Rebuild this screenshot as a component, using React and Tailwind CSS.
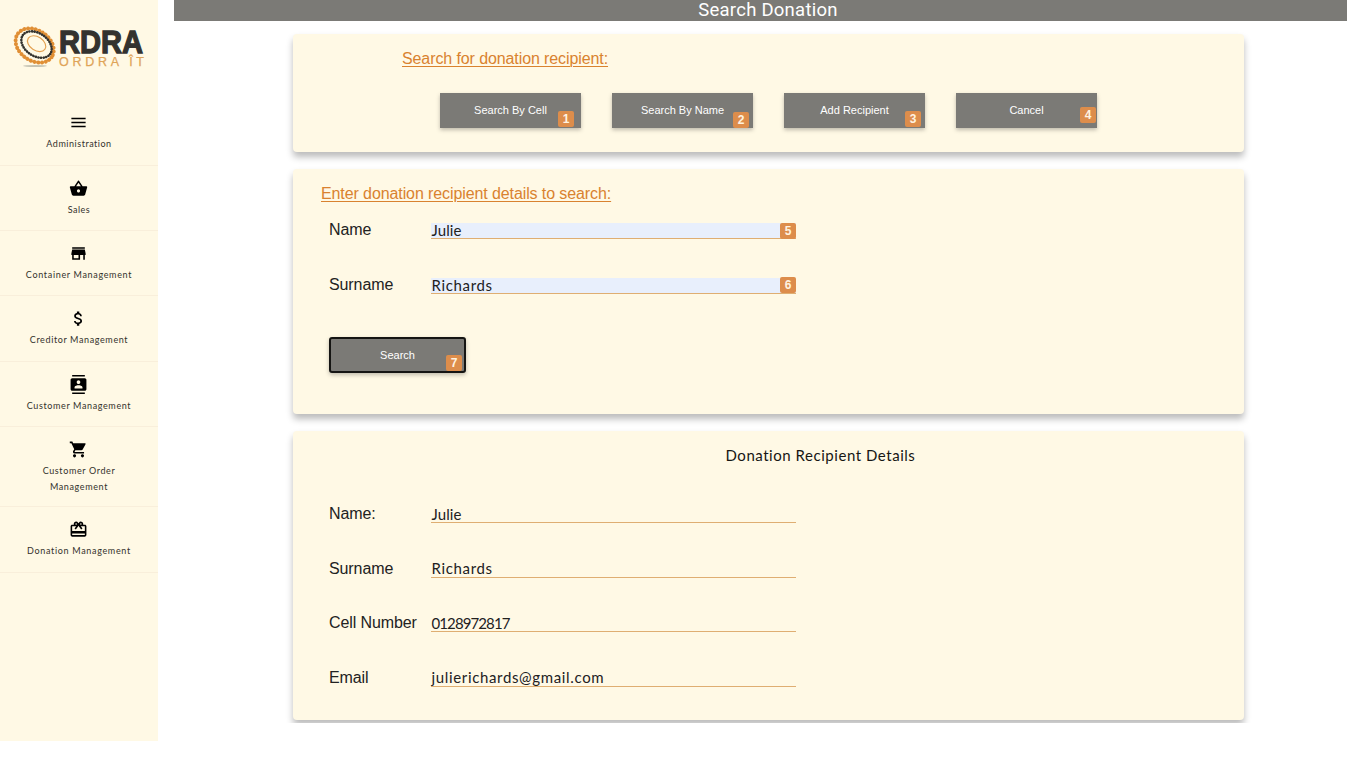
import React from "react";
import {
  MdMenu,
  MdShoppingBasket,
  MdStore,
  MdAttachMoney,
  MdContacts,
  MdShoppingCart,
  MdCardGiftcard,
} from "react-icons/md";

const NAV = [
  { icon: MdMenu, lines: ["Administration"], box: "h-[66px]", track: "tracking-[0.52px]" },
  { icon: MdShoppingBasket, lines: ["Sales"], box: "h-[65px]", track: "tracking-[0.5px]" },
  { icon: MdStore, lines: ["Container Management"], box: "h-[65px]", track: "tracking-[0.67px]" },
  { icon: MdAttachMoney, lines: ["Creditor Management"], box: "h-[66px]", track: "tracking-[0.62px]" },
  { icon: MdContacts, lines: ["Customer Management"], box: "h-[65px]", track: "tracking-[0.62px]" },
  { icon: MdShoppingCart, lines: ["Customer Order", "Management"], box: "h-[80px]", track: "tracking-[0.62px]" },
  { icon: MdCardGiftcard, lines: ["Donation Management"], box: "h-[66px]", track: "tracking-[0.67px]" },
];

function Logo() {
  return (
    <svg className="block h-[100px] w-[158px]" viewBox="0 0 158 100">
      <ellipse cx="35" cy="66" rx="12" ry="0.9" fill="#c4c2b2" />
      <g transform="rotate(34 35 45)" fill="none" strokeLinecap="round">
        <ellipse cx="35" cy="45.6" rx="20.6" ry="15.2" stroke="#e08f35" strokeWidth="4" strokeDasharray="0.1 3.7" />
        <ellipse cx="36" cy="43.8" rx="16.6" ry="11.4" stroke="#33322e" strokeWidth="2.6" strokeDasharray="0.1 2.5" />
        <ellipse cx="35.6" cy="43" rx="10" ry="6.8" stroke="#e3a050" strokeWidth="1.2" />
      </g>
      <text x="59" y="53.4" fontFamily="Liberation Sans, sans-serif" fontWeight="700" fontSize="32" fill="#33322f" stroke="#33322f" strokeWidth="1.3" textLength="84" lengthAdjust="spacingAndGlyphs">RDRA</text>
      <text x="59" y="66.4" fontFamily="Liberation Sans, sans-serif" fontSize="12.5" fill="#e0a458" stroke="#e0a458" strokeWidth="0.25" textLength="85" lengthAdjust="spacing">ORDRA ÎT</text>
    </svg>
  );
}

function Badge({ n, place }) {
  return (
    <span className={"absolute flex h-4 w-4 items-center justify-center rounded-[2px] bg-[#dd8d4b] text-[12px] leading-none font-bold text-[#fff3e0] " + place}>
      {n}
    </span>
  );
}

function Card({ className, children }) {
  return (
    <section className={"w-[951px] rounded-[4px] bg-[#fff9e5] shadow-[0_5px_7px_rgba(0,0,0,0.27)] " + className}>
      {children}
    </section>
  );
}

function ActionButton({ label, n, place }) {
  return (
    <button className="relative h-[35px] w-[141px] bg-[#7b7a76] text-[11px] text-white shadow-[0_2px_4px_rgba(0,0,0,0.25)]">
      {label}
      <Badge n={n} place={place} />
    </button>
  );
}

function Field({ label, value, track, filled, n, place }) {
  return (
    <div className="flex h-4 w-[467px] items-center">
      <label className="w-[102px] shrink-0 pb-[2px] text-[16px] leading-4 tracking-[-0.1px] whitespace-nowrap text-[#222]">{label}</label>
      <div className={"relative flex h-4 w-[365px] items-center border-b border-[#dfae72] pb-[2px] " + (filled ? "bg-[#e8effc]" : "")}>
        <span className={"pl-[0.5px] font-[Lato,sans-serif] text-[15px] leading-4 whitespace-nowrap text-[#22211f] " + track}>{value}</span>
        {n && <Badge n={n} place={place} />}
      </div>
    </div>
  );
}

export default function App() {
  return (
    <div className="flex h-[758px] w-[1347px] overflow-hidden bg-white font-['Liberation_Sans',Arial,sans-serif]">
      <aside className="h-[741px] w-[158px] shrink-0 bg-[#fff9e5]">
        <Logo />
        <nav>
          {NAV.map(({ icon: Icon, lines, box, track }) => (
            <a key={lines.join(" ")} className={"flex flex-col items-center border-b border-[#f9efdb] pt-[13px] text-black " + box}>
              <Icon size={19} className="mr-px" />
              <span className={"mt-[4px] flex flex-col items-center font-[Lato,sans-serif] text-[9px] leading-[15.5px] whitespace-nowrap text-[#33312c] " + track}>
                {lines.map((l) => (
                  <span key={l}>{l}</span>
                ))}
              </span>
            </a>
          ))}
        </nav>
      </aside>

      <div className="ml-4 w-[1173px]">
        <header className="flex h-[21px] items-start justify-center bg-[#7b7a76] pl-[15px]">
          <h1 className="font-[Roboto,sans-serif] text-[18.5px] leading-5 tracking-[0.25px] whitespace-nowrap text-white">Search Donation</h1>
        </header>

        <main className="flex h-[702px] flex-col items-start gap-[17px] overflow-hidden pt-[13px] pl-[119px]">
          <Card className="h-[118px] shrink-0">
            <h2 className="pt-[15px] pl-[109px] text-[16px] leading-5 tracking-[-0.1px] text-[#d9822f] underline decoration-1 underline-offset-2">
              Search for donation recipient:
            </h2>
            <div className="mt-[24px] ml-[147px] flex gap-[31px]">
              <ActionButton label="Search By Cell" n="1" place="left-[118px] top-[18px]" />
              <ActionButton label="Search By Name" n="2" place="left-[121px] top-[19px]" />
              <ActionButton label="Add Recipient" n="3" place="left-[121px] top-[18px]" />
              <ActionButton label="Cancel" n="4" place="left-[124px] top-[14px]" />
            </div>
          </Card>

          <Card className="h-[245px] shrink-0">
            <h2 className="pt-[15px] pl-[28px] text-[16px] leading-5 tracking-[-0.1px] text-[#d9822f] underline decoration-1 underline-offset-2">
              Enter donation recipient details to search:
            </h2>
            <div className="mt-[19px] ml-9 flex flex-col gap-[39px]">
              <Field label="Name" value="Julie" track="tracking-[0.1px]" filled n="5" place="left-[349px] top-0" />
              <Field label="Surname" value="Richards" track="tracking-[0.65px]" filled n="6" place="left-[349px] -top-px" />
            </div>
            <button className="relative mt-[43px] ml-9 block h-[36px] w-[137px] rounded-[3px] border-2 border-[#151513] bg-[#7b7a76] text-[11px] text-white shadow-[0_2px_4px_rgba(0,0,0,0.25)]">
              Search
              <Badge n="7" place="left-[115px] top-[16px]" />
            </button>
          </Card>

          <Card className="h-[289px] shrink-0">
            <h2 className="pt-[14px] pl-[432.5px] font-[Lato,sans-serif] text-[15px] leading-5 tracking-[0.54px] whitespace-nowrap text-[#161614]">
              Donation Recipient Details
            </h2>
            <div className="mt-[42px] ml-9 flex flex-col gap-[38.5px]">
              <Field label="Name:" value="Julie" track="tracking-[0.1px]" />
              <Field label="Surname" value="Richards" track="tracking-[0.65px]" />
              <Field label="Cell Number" value="0128972817" track="tracking-[-0.9px]" />
              <Field label="Email" value="julierichards@gmail.com" track="tracking-[0.65px]" />
            </div>
          </Card>
        </main>
      </div>
    </div>
  );
}
